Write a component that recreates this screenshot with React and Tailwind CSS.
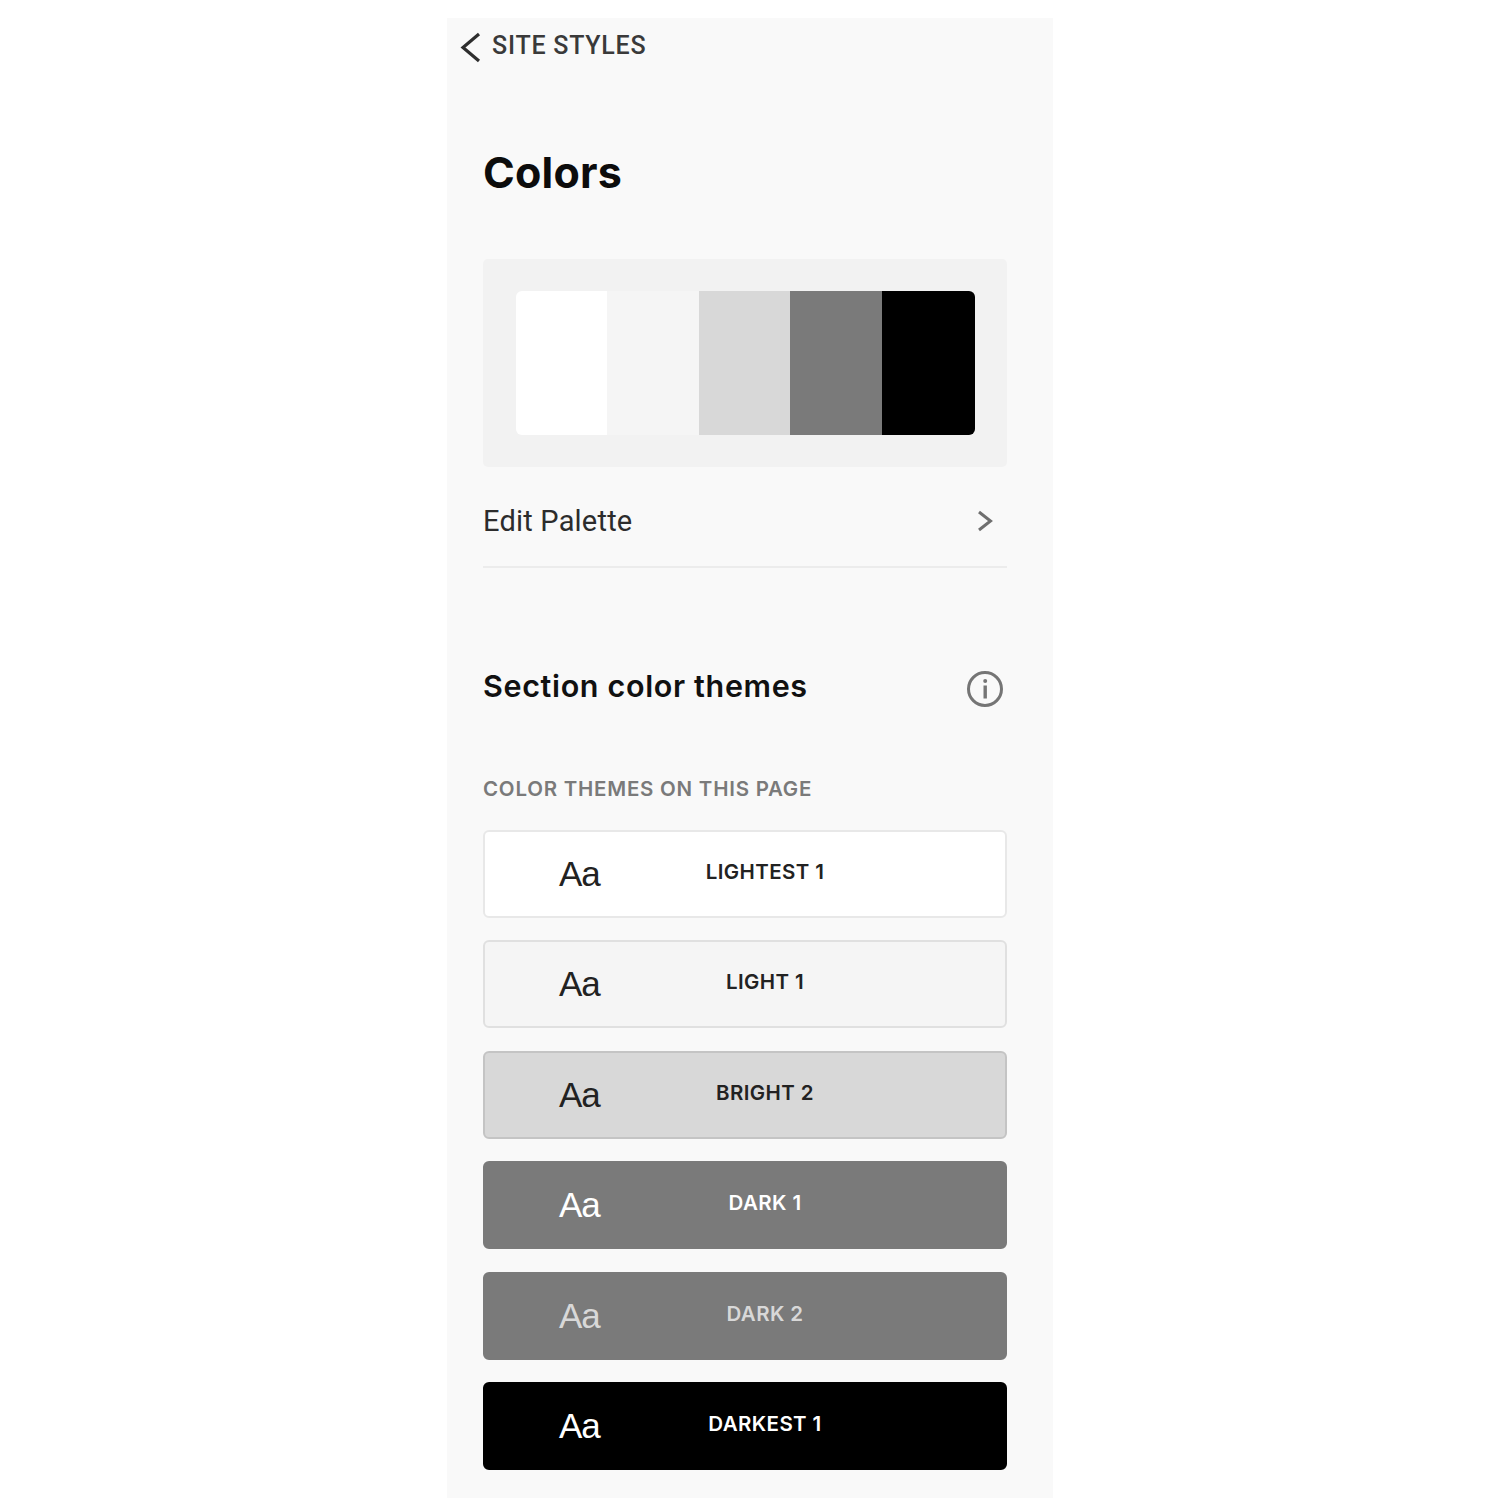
const themes = [
  { name: "LIGHTEST 1", box: "bg-white border-[#e8e8e8] text-[#222222]" },
  { name: "LIGHT 1", box: "bg-[#f5f5f5] border-[#e0e0e0] text-[#222222]" },
  { name: "BRIGHT 2", box: "bg-[#d8d8d8] border-[#c4c4c4] text-[#222222]" },
  { name: "DARK 1", box: "bg-[#7a7a7a] border-[#7a7a7a] text-white" },
  { name: "DARK 2", box: "bg-[#7a7a7a] border-[#7a7a7a] text-[#d8d8d8]" },
  { name: "DARKEST 1", box: "bg-black border-black text-white" },
];

export default function App() {
  return (
    <div className="w-[1500px] h-[1500px] bg-white pt-[18px] font-['Inter',sans-serif]">
      <div className="mx-auto w-[606px] h-[1480px] bg-[#f9f9f9] flex flex-col">
        <div className="h-[60px] flex items-start pl-[13px] pt-[13px] gap-[11px]">
          <svg width="21" height="32" viewBox="0 0 21 32" fill="none" className="shrink-0">
            <path d="M19 3 L3 16.5 L19 30" stroke="#2e2e2e" strokeWidth="3.2" />
          </svg>
          <span className="text-[25px] leading-[30px] font-medium text-[#3a3a3a] tracking-[0.76px] font-['Roboto',sans-serif]">SITE STYLES</span>
        </div>

        <div className="pl-[36px] pr-[46px] flex flex-col">
          <h1 className="mt-[65px] text-[43px] leading-[58px] font-bold text-[#0c0c0c] tracking-[0.2px]">Colors</h1>

          <div className="mt-[58px] h-[208px] rounded-[5px] bg-[#f2f2f2] pl-[33px] pt-[32px]">
            <div className="flex w-[459px] h-[144px] rounded-[6px] overflow-hidden">
              <div className="w-[91px] bg-white" />
              <div className="w-[92px] bg-[#f5f5f5]" />
              <div className="w-[91px] bg-[#d8d8d8]" />
              <div className="w-[92px] bg-[#7a7a7a]" />
              <div className="flex-1 bg-black" />
            </div>
          </div>

          <div className="h-[101px] border-b-2 border-[#ececec] flex items-center justify-between pr-[13px] pt-[9px]">
            <span className="text-[29px] leading-[40px] text-[#2c2c2c] tracking-[0.2px] font-['Roboto',sans-serif]">Edit Palette</span>
            <svg width="18" height="24" viewBox="0 0 18 24" fill="none">
              <path d="M3 3 L14.5 12 L3 21" stroke="#6f6f6f" strokeWidth="3" />
            </svg>
          </div>

          <div className="mt-[94px] h-[50px] flex items-center justify-between pr-[3px]">
            <h2 className="text-[30.5px] leading-[50px] font-semibold text-[#111111] tracking-[0.65px] -mt-[3px]">Section color themes</h2>
            <svg width="38" height="38" viewBox="0 0 38 38" fill="none" className="mt-[4px]">
              <circle cx="19" cy="19" r="16.5" stroke="#757575" strokeWidth="3" />
              <rect x="17.5" y="15.5" width="3.4" height="13" fill="#757575" />
              <circle cx="19.2" cy="11" r="2" fill="#757575" />
            </svg>
          </div>

          <div className="mt-[65px] h-[24px] text-[20.5px] leading-[24px] font-semibold text-[#7a7a7a] tracking-[0.76px]">COLOR THEMES ON THIS PAGE</div>

          <div className="mt-[28.5px] flex flex-col gap-[22.5px]">
            {themes.map((t) => (
              <div key={t.name} className={`relative h-[88px] rounded-[6px] border-2 flex items-center ${t.box}`}>
                <span className="ml-[74px] text-[35px] leading-[40px] tracking-[-1px] font-['Liberation_Sans',sans-serif]">Aa</span>
                <span className="absolute left-0 right-0 top-[27px] pl-[40px] text-center text-[20.5px] leading-[26px] font-semibold tracking-[0.4px]">{t.name}</span>
              </div>
            ))}
          </div>
        </div>
      </div>
    </div>
  );
}
